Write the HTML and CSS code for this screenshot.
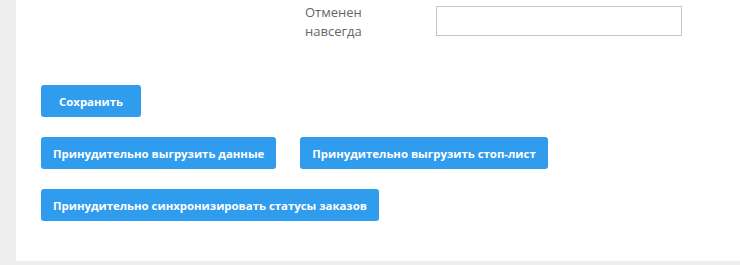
FILE: index.html
```html
<!DOCTYPE html>
<html lang="ru">
<head>
<meta charset="utf-8">
<link rel="stylesheet" href="styles.css">
</head>
<body>
<div class="page">
  <div class="panel">
    <div class="field-row">
      <label class="field-label">Отменен<br>навсегда</label>
      <input class="field-input" type="text">
    </div>
    <div class="actions">
      <div class="btn-row"><button class="btn">Сохранить</button></div>
      <div class="btn-row">
        <button class="btn">Принудительно выгрузить данные</button>
        <button class="btn">Принудительно выгрузить стоп-лист</button>
      </div>
      <div class="btn-row"><button class="btn">Принудительно синхронизировать статусы заказов</button></div>
    </div>
  </div>
</div>
</body>
</html>
```
FILE: styles.css
```css
html, body {
  margin: 0;
  padding: 0;
  background: #eeeeee;
  font-family: "Open Sans", "Liberation Sans", sans-serif;
}
.page {
  padding: 0 0 4px 16px;
  height: 265px;
  box-sizing: border-box;
}
.panel {
  background: #ffffff;
  height: 261px;
  box-sizing: border-box;
  padding: 3px 0 0 25px;
}
.field-row {
  display: flex;
  align-items: flex-start;
  padding-left: 264px;
}
.field-label {
  width: 131px;
  font-size: 13px;
  line-height: 19px;
  color: #666666;
}
.field-input {
  width: 246px;
  height: 30px;
  box-sizing: border-box;
  border: 1px solid #c6c6c6;
  margin: 3px 0 0 0;
  padding: 0 8px;
  background: #fff;
  outline: none;
}
.actions {
  display: flex;
  flex-direction: column;
  gap: 20px;
  margin-top: 44px;
}
.btn-row {
  display: flex;
  gap: 24px;
}
.btn {
  height: 32px;
  min-width: 100px;
  padding: 0 12px;
  border: none;
  border-radius: 3px;
  background: #2f9cee;
  color: #ffffff;
  font-family: "Open Sans", "Liberation Sans", sans-serif;
  font-weight: 700;
  font-size: 11.4px;
  cursor: pointer;
}
```
